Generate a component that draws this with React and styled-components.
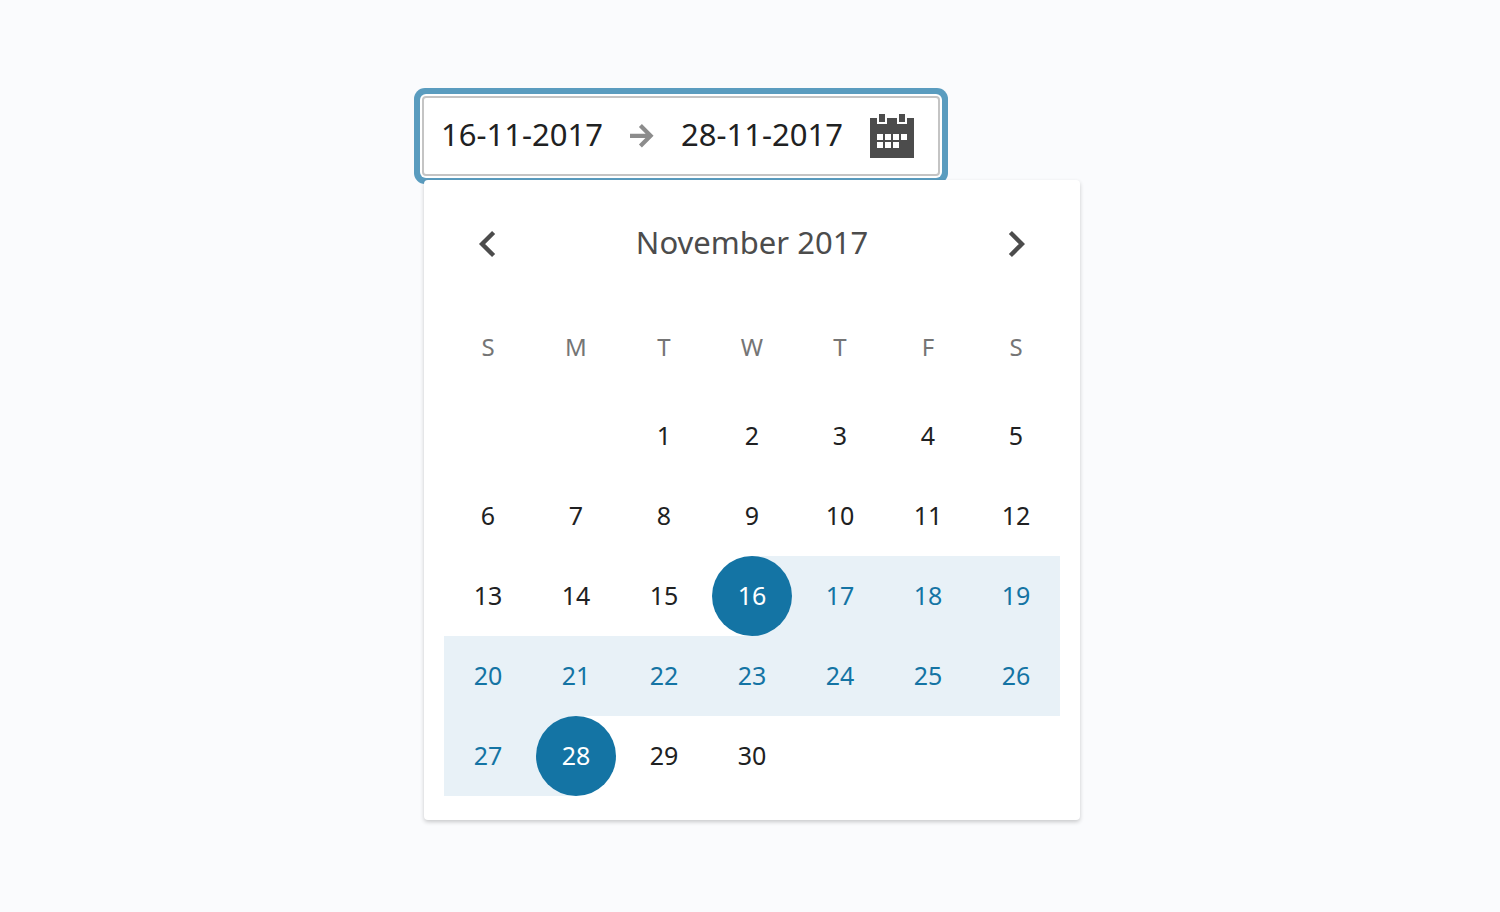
import React from 'react';
import styled, { createGlobalStyle, css } from 'styled-components';

const colors = {
  page: '#fafbfd',
  ink: '#202122',
  heading: '#4c4c4c',
  muted: '#757575',
  accent: '#1474a4',
  range: '#e8f1f7',
  ring: '#5a9cbf',
  border: '#c4c4c4',
};

const GlobalStyle = createGlobalStyle`
  *, *::before, *::after { box-sizing: border-box; }
  body {
    margin: 0;
    background: ${colors.page};
    color: ${colors.ink};
    font-family: "Noto Sans", "Open Sans", sans-serif;
  }
  button, input { font: inherit; color: inherit; }
`;

const Page = styled.main`
  display: flex;
  justify-content: center;
  min-height: 100vh;
  padding: 96px 0 92px 2px;
`;

const DatePicker = styled.div`
  width: 100%;
  max-width: 658px;
`;

const Field = styled.div`
  display: flex;
  align-items: center;
  gap: 24px;
  width: fit-content;
  height: 80px;
  padding: 0 24px 0 14px;
  background: #fff;
  border: 2px solid ${colors.border};
  border-radius: 4px;
  box-shadow: 0 0 0 2px #fff, 0 0 0 8px ${colors.ring};
`;

const DateInput = styled.input`
  width: 168px;
  padding: 0 0 4px;
  border: 0;
  outline: 0;
  background: transparent;
  font-size: 31px;
  line-height: 40px;
  text-align: center;
`;

const IconButton = styled.button`
  display: flex;
  align-items: center;
  justify-content: center;
  width: ${(p) => p.$width}px;
  height: ${(p) => p.$height}px;
  padding: 0;
  border: 0;
  background: transparent;
  color: ${colors.heading};
  cursor: pointer;
`;

const Panel = styled.section`
  position: relative;
  margin: 4px 0 0 2px;
  padding: 24px 20px;
  background: #fff;
  border-radius: 4px;
  box-shadow: 0 2px 4px rgba(0, 0, 0, 0.2);
`;

const MonthBar = styled.header`
  display: flex;
  align-items: center;
  justify-content: space-between;
`;

const MonthTitle = styled.h2`
  margin: 0;
  padding-bottom: 4px;
  color: ${colors.heading};
  font-size: 31px;
  font-weight: 400;
  line-height: 40px;
`;

const MonthGrid = styled.table`
  width: 100%;
  table-layout: fixed;
  border-collapse: collapse;
`;

const Weekday = styled.th`
  height: 112px;
  padding: 14px 0 0;
  color: ${colors.muted};
  font-size: 24px;
  font-weight: 400;
  line-height: 32px;
`;

const backgrounds = {
  start: css`background: linear-gradient(to right, transparent 50%, ${colors.range} 50%);`,
  inside: css`background: ${colors.range};`,
  end: css`background: linear-gradient(to left, transparent 50%, ${colors.range} 50%);`,
};

const DayCell = styled.td`
  height: 80px;
  padding: 0;
  ${(p) => backgrounds[p.$range]}
`;

const dayStyles = {
  start: css`background: ${colors.accent}; color: #fff;`,
  inside: css`color: ${colors.accent};`,
  end: css`background: ${colors.accent}; color: #fff;`,
};

const DayButton = styled.button`
  display: block;
  width: 80px;
  height: 80px;
  margin: 0 auto;
  padding: 0 0 2px;
  border: 0;
  border-radius: 50%;
  background: transparent;
  font-size: 25px;
  line-height: 32px;
  cursor: pointer;
  ${(p) => dayStyles[p.$range]}
`;

const ArrowIcon = () => (
  <svg width="24" height="24" viewBox="0 0 24 24" fill="none" stroke="#8c8c8c" strokeWidth="4.2" aria-hidden="true">
    <path d="M0 11.8H20M10.4 1.6l10.2 10.2-10.2 10.2" />
  </svg>
);

const CalendarIcon = () => (
  <svg width="44" height="44" viewBox="0 0 44 44" fill="currentColor" shapeRendering="crispEdges" aria-hidden="true">
    <path
      fillRule="evenodd"
      d="M0 4h7v6h10V4h10v6h10V4h7v40H0zM7 20h6v6H7zM15 20h6v6h-6zM23 20h6v6h-6zM31 20h6v6h-6zM7 28h6v6H7zM15 28h6v6h-6zM23 28h6v6h-6z"
    />
    <path d="M9 0h6v8H9zM29 0h6v8h-6z" />
  </svg>
);

const Chevron = ({ points }) => (
  <svg width="24" height="32" viewBox="-12 -16 24 32" fill="none" stroke="currentColor" strokeWidth="4.4" aria-hidden="true">
    <polyline points={points} />
  </svg>
);

const weekdays = [
  ['S', 'Sunday'],
  ['M', 'Monday'],
  ['T', 'Tuesday'],
  ['W', 'Wednesday'],
  ['T', 'Thursday'],
  ['F', 'Friday'],
  ['S', 'Saturday'],
];

const weeks = [
  [null, null, 1, 2, 3, 4, 5],
  [6, 7, 8, 9, 10, 11, 12],
  [13, 14, 15, 16, 17, 18, 19],
  [20, 21, 22, 23, 24, 25, 26],
  [27, 28, 29, 30, null, null, null],
];

const START = 16;
const END = 28;

const rangeOf = (day) => {
  if (day === START) return 'start';
  if (day === END) return 'end';
  if (day > START && day < END) return 'inside';
  return 'none';
};

export default function App() {
  return (
    <>
      <GlobalStyle />
      <Page>
        <DatePicker>
          <Field>
            <DateInput aria-label="Start date" defaultValue="16-11-2017" />
            <ArrowIcon />
            <DateInput aria-label="End date" defaultValue="28-11-2017" />
            <IconButton type="button" $width={44} $height={44} aria-label="Toggle calendar">
              <CalendarIcon />
            </IconButton>
          </Field>
          <Panel aria-label="Calendar">
            <MonthBar>
              <IconButton type="button" $width={88} $height={80} aria-label="Previous month">
                <Chevron points="5.6,-11.5 -5.9,0 5.6,11.5" />
              </IconButton>
              <MonthTitle>November 2017</MonthTitle>
              <IconButton type="button" $width={88} $height={80} aria-label="Next month">
                <Chevron points="-5.6,-11.5 5.9,0 -5.6,11.5" />
              </IconButton>
            </MonthBar>
            <MonthGrid>
              <thead>
                <tr>
                  {weekdays.map(([letter, name]) => (
                    <Weekday key={name} scope="col" abbr={name}>{letter}</Weekday>
                  ))}
                </tr>
              </thead>
              <tbody>
                {weeks.map((week, row) => (
                  <tr key={row}>
                    {week.map((day, col) => (
                      <DayCell key={col} $range={rangeOf(day)}>
                        {day && <DayButton type="button" $range={rangeOf(day)}>{day}</DayButton>}
                      </DayCell>
                    ))}
                  </tr>
                ))}
              </tbody>
            </MonthGrid>
          </Panel>
        </DatePicker>
      </Page>
    </>
  );
}
